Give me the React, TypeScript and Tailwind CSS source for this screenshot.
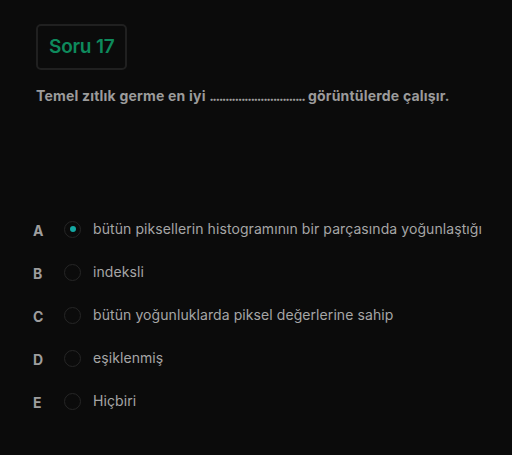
import { useState } from "react";

const options = [
  { key: "A", text: "bütün piksellerin histogramının bir parçasında yoğunlaştığı" },
  { key: "B", text: "indeksli" },
  { key: "C", text: "bütün yoğunluklarda piksel değerlerine sahip" },
  { key: "D", text: "eşiklenmiş" },
  { key: "E", text: "Hiçbiri" },
];

export default function App() {
  const [selected, setSelected] = useState("A");

  return (
    <div
      className="w-[512px] h-[455px] bg-[#0b0b0b] overflow-hidden"
      style={{ fontFamily: "Inter, 'Noto Sans', sans-serif" }}
    >
      <div className="pl-[36px] pt-[24px]">
        <div className="inline-flex items-center h-[46px] px-[11px] border-2 border-[#202020] rounded-[5px]">
          <span className="text-[19px] font-semibold text-[#0e8a5c] tracking-[-0.2px]">Soru 17</span>
        </div>
        <p className="mt-[15px] text-[14px] font-bold text-[#9b9b9b] tracking-[0.2px]">
          Temel zıtlık germe en iyi{" "}
          <span className="tracking-[-1.5px]">..............................</span>{" "}
          görüntülerde çalışır.
        </p>
      </div>

      {/* Options */}
      <div className="mt-[112px] pl-[33px] flex flex-col gap-[21px]">
        {options.map((o) => (
          <div
            key={o.key}
            className="flex items-center cursor-pointer h-[22px]"
            onClick={() => setSelected(o.key)}
          >
            <span className="w-[31px] text-[14px] font-bold text-[#9e9e9e] mt-[3px]">{o.key}</span>
            <span className="w-[17px] h-[17px] rounded-full border border-[#262626] flex items-center justify-center">
              {selected === o.key && <span className="w-[6px] h-[6px] rounded-full bg-[#14a8a3]" />}
            </span>
            <span className="ml-[12px] text-[14px] text-[#a6a6a6] tracking-[0.08px] -mt-[1px]">{o.text}</span>
          </div>
        ))}
      </div>
    </div>
  );
}
